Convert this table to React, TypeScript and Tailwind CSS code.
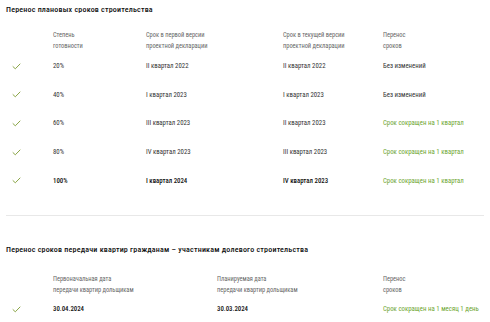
const rows = [
  { pct: '20%', first: 'II квартал 2022', current: 'II квартал 2022', shift: 'Без изменений', changed: false, bold: false },
  { pct: '40%', first: 'I квартал 2023', current: 'I квартал 2023', shift: 'Без изменений', changed: false, bold: false },
  { pct: '60%', first: 'III квартал 2023', current: 'II квартал 2023', shift: 'Срок сокращен на 1 квартал', changed: true, bold: false },
  { pct: '80%', first: 'IV квартал 2023', current: 'III квартал 2023', shift: 'Срок сокращен на 1 квартал', changed: true, bold: false },
  { pct: '100%', first: 'I квартал 2024', current: 'IV квартал 2023', shift: 'Срок сокращен на 1 квартал', changed: true, bold: true },
];

function Check() {
  return (
    <svg width="9" height="7" viewBox="0 0 9 7" fill="none" className="ml-[6px]">
      <path d="M1 3.6 L3.3 5.8 L8 1" stroke="#8aa547" strokeWidth="1" strokeLinecap="round" strokeLinejoin="round" />
    </svg>
  );
}

export default function App() {
  return (
    <div className="w-[490px] h-[322px] overflow-hidden bg-white px-[6px] pt-[3px] [font-family:'Roboto_Condensed','Liberation_Sans',sans-serif] text-[#333]">
      <h2 className="text-[8px] leading-[14px] tracking-[0.2px] font-medium text-[#111]">Перенос плановых сроков строительства</h2>

      <div className="mt-[13px] grid grid-cols-[47px_93px_137px_100px_1fr] text-[6.4px] leading-[11px] text-[#666]">
        <div />
        <div>Степень<br />готовности</div>
        <div>Срок в первой версии<br />проектной декларации</div>
        <div>Срок в текущей версии<br />проектной декларации</div>
        <div>Перенос<br />сроков</div>
      </div>

      {rows.map((r) => (
        <div key={r.pct} className="grid h-[28.6px] grid-cols-[47px_93px_137px_100px_1fr] items-center text-[6.8px]">
          <Check />
          <div className={r.bold ? 'font-medium text-[#111]' : ''}>{r.pct}</div>
          <div className={r.bold ? 'font-medium text-[#111]' : ''}>{r.first}</div>
          <div className={r.bold ? 'font-medium text-[#111]' : ''}>{r.current}</div>
          <div className={r.changed ? 'text-[#6da52f]' : ''}>{r.shift}</div>
        </div>
      ))}

      <div className="mt-[20px] h-px bg-[#e8e8e8]" />

      <h2 className="mt-[27px] text-[8px] leading-[14px] tracking-[0.2px] font-medium text-[#111]">
        Перенос сроков передачи квартир гражданам – участникам долевого строительства
      </h2>

      <div className="mt-[17px] grid grid-cols-[47px_164px_166px_1fr] text-[6.4px] leading-[11px] text-[#666]">
        <div />
        <div>Первоначальная дата<br />передачи квартир дольщикам</div>
        <div>Планируемая дата<br />передачи квартир дольщикам</div>
        <div>Перенос<br />сроков</div>
      </div>

      <div className="grid h-[27px] grid-cols-[47px_164px_166px_1fr] items-center text-[6.8px]">
        <Check />
        <div className="font-medium text-[#111]">30.04.2024</div>
        <div className="font-medium text-[#111]">30.03.2024</div>
        <div className="whitespace-nowrap text-[#6da52f]">Срок сокращен на 1 месяц 1 день</div>
      </div>
    </div>
  );
}
